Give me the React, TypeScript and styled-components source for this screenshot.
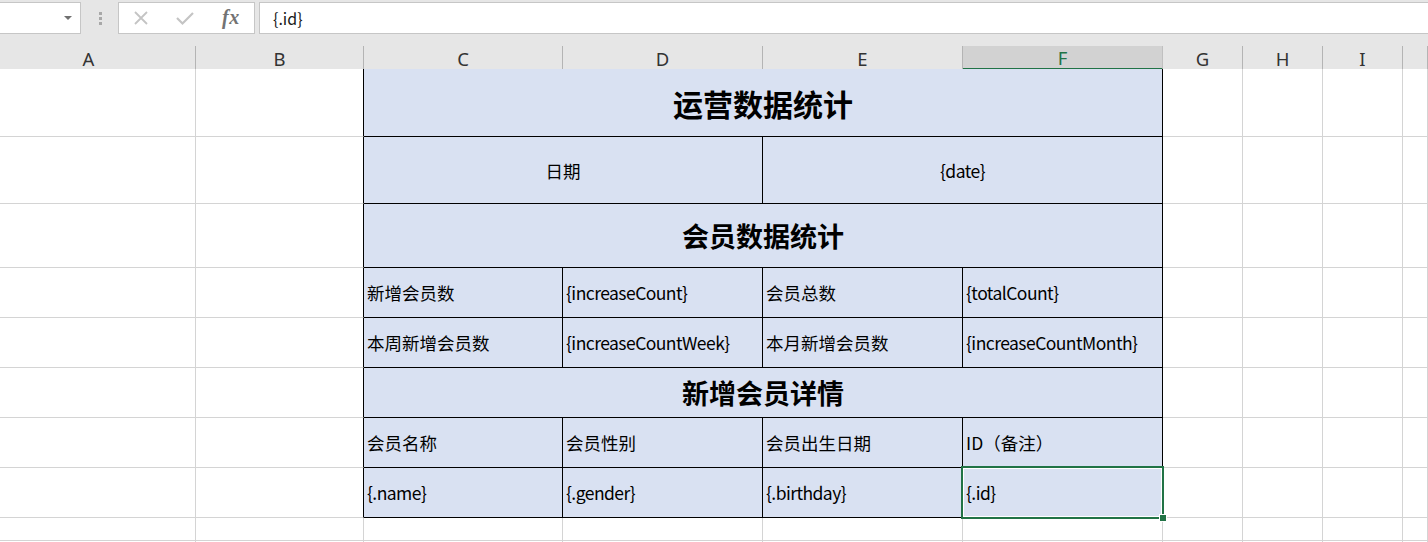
import { Fragment } from 'react';
import styled, { createGlobalStyle } from 'styled-components';

const GlobalStyle = createGlobalStyle`
  html, body {
    margin: 0;
    padding: 0;
    background: #fff;
    overflow: hidden;
  }
  body {
    font-family: "Noto Sans CJK SC", "Noto Sans", sans-serif;
  }
`;

const COLS = '196px 168px 199px 200px 200px 200px 80px 80px 80px 1fr';
const ROWS = '68px 67px 64px 50px 50px 50px 50px 50px 23px 50px';

const Page = styled.div`
  width: 1428px;
  height: 542px;
  display: flex;
  flex-direction: column;
  overflow: hidden;
`;

const FormulaBar = styled.div`
  flex-shrink: 0;
  height: 46px;
  box-sizing: border-box;
  background: #e6e6e6;
  display: flex;
  align-items: flex-start;
  padding-top: 2px;
`;

const NameBox = styled.div`
  width: 82px;
  height: 32px;
  margin-left: -1px;
  box-sizing: border-box;
  background: #fff;
  border: 1px solid #c6c6c6;
  display: flex;
  align-items: center;
  justify-content: flex-end;
  padding-right: 8px;
`;

const Caret = styled.span`
  width: 0;
  height: 0;
  border-left: 4px solid transparent;
  border-right: 4px solid transparent;
  border-top: 4px solid #707070;
`;

const Grip = styled.div`
  width: 37px;
  height: 32px;
  display: flex;
  flex-direction: column;
  align-items: center;
  justify-content: center;
  gap: 2px;
  padding-left: 1px;
  box-sizing: border-box;

  span {
    width: 3px;
    height: 3px;
    background: #a8a8a8;
  }
`;

const EditBox = styled.div`
  width: 137px;
  height: 32px;
  box-sizing: border-box;
  background: #fff;
  border: 1px solid #c6c6c6;
  display: flex;
  align-items: center;
  padding-left: 14px;
  gap: 26px;
`;

const Fx = styled.span`
  font-family: "Liberation Serif", "DejaVu Serif", serif;
  font-style: italic;
  font-size: 20px;
  font-weight: bold;
  color: #737373;
  letter-spacing: 0.5px;
  margin-left: 1px;
  margin-top: -2px;
`;

const FormulaInput = styled.div`
  flex: 1;
  height: 32px;
  margin-left: 4px;
  margin-right: -1px;
  box-sizing: border-box;
  background: #fff;
  border: 1px solid #c6c6c6;
  display: flex;
  align-items: center;
  padding-left: 13px;
  font-size: 16px;
  color: #1a1a1a;
`;

const HeaderRow = styled.div`
  flex-shrink: 0;
  display: grid;
  grid-template-columns: ${COLS};
  height: 23px;
  background: #e6e6e6;
`;

const ColHead = styled.div<{ $active?: boolean; $shift?: number }>`
  box-sizing: border-box;
  border-right: 1px solid ${(p) => (p.$active ? '#c0c0c0' : '#b4b4b4')};
  border-bottom: ${(p) => (p.$active ? '2px solid #217346' : '1px solid #ababab')};
  background: ${(p) => (p.$active ? '#d2d2d2' : 'transparent')};
  color: ${(p) => (p.$active ? '#217346' : '#333')};
  font-family: "Noto Sans", "Open Sans", sans-serif;
  font-size: 18.5px;
  line-height: 1;
  display: flex;
  align-items: center;
  justify-content: center;
  padding-right: ${(p) => p.$shift ?? 0}px;
  padding-top: 3px;
`;

const Sheet = styled.div`
  display: grid;
  grid-template-columns: ${COLS};
  grid-template-rows: ${ROWS};
  flex: 1;
  min-height: 0;
  overflow: hidden;
`;

const Cell = styled.div<{
  $span?: number;
  $table?: boolean;
  $edge?: boolean;
  $align?: 'left' | 'center';
  $size?: number;
  $bold?: boolean;
  $latin?: boolean;
}>`
  position: relative;
  box-sizing: border-box;
  grid-column: span ${(p) => p.$span ?? 1};
  border-right: 1px solid ${(p) => (p.$table || p.$edge ? '#000' : '#d4d4d4')};
  border-bottom: 1px solid ${(p) => (p.$table ? '#000' : '#d4d4d4')};
  background: ${(p) => (p.$table ? '#d9e1f2' : '#fff')};
  display: flex;
  align-items: center;
  justify-content: ${(p) => (p.$align === 'center' ? 'center' : 'flex-start')};
  padding-left: ${(p) => (p.$align === 'center' ? 0 : 3)}px;
  font-size: ${(p) => p.$size ?? 17.5}px;
  font-weight: ${(p) => (p.$bold ? 700 : 400)};
  letter-spacing: ${(p) => (p.$latin ? '-0.55px' : '0')};
  color: #000;
  white-space: nowrap;
`;

const Selection = styled.div`
  position: absolute;
  top: -2px;
  left: -2px;
  right: -2px;
  bottom: -2px;
  border: 2px solid #217346;
  box-shadow: inset 0 0 0 1px #fff;
  z-index: 2;

  &::after {
    content: '';
    position: absolute;
    right: -5px;
    bottom: -5px;
    width: 6px;
    height: 6px;
    background: #217346;
    border: 1px solid #fff;
  }
`;

type TCell = { text: string; span?: number; title?: number; center?: boolean; selected?: boolean };

const tableRows: TCell[][] = [
  [{ text: '运营数据统计', span: 4, title: 30 }],
  [
    { text: '日期', span: 2, center: true },
    { text: '{date}', span: 2, center: true },
  ],
  [{ text: '会员数据统计', span: 4, title: 27 }],
  [
    { text: '新增会员数' },
    { text: '{increaseCount}' },
    { text: '会员总数' },
    { text: '{totalCount}' },
  ],
  [
    { text: '本周新增会员数' },
    { text: '{increaseCountWeek}' },
    { text: '本月新增会员数' },
    { text: '{increaseCountMonth}' },
  ],
  [{ text: '新增会员详情', span: 4, title: 27 }],
  [
    { text: '会员名称' },
    { text: '会员性别' },
    { text: '会员出生日期' },
    { text: 'ID（备注）' },
  ],
  [
    { text: '{.name}' },
    { text: '{.gender}' },
    { text: '{.birthday}' },
    { text: '{.id}', selected: true },
  ],
];

const letters = ['A', 'B', 'C', 'D', 'E', 'F', 'G', 'H', 'I', ''];

const isLatin = (s: string) => /^[\x20-\x7e]+$/.test(s);

function CrossIcon() {
  return (
    <svg width="16" height="16" viewBox="0 0 16 16">
      <path d="M2 2 L14 14 M14 2 L2 14" stroke="#c4c4c4" strokeWidth="1.8" fill="none" />
    </svg>
  );
}

function CheckIcon() {
  return (
    <svg width="20" height="16" viewBox="0 0 20 16">
      <path d="M2 8 L7.5 13.5 L18 3" stroke="#c4c4c4" strokeWidth="2.2" fill="none" />
    </svg>
  );
}

export default function App() {
  const extraRows = 2;
  return (
    <Page>
      <GlobalStyle />
      <FormulaBar>
        <NameBox>
          <Caret />
        </NameBox>
        <Grip>
          <span />
          <span />
          <span />
        </Grip>
        <EditBox>
          <CrossIcon />
          <CheckIcon />
          <Fx>fx</Fx>
        </EditBox>
        <FormulaInput>{'{.id}'}</FormulaInput>
      </FormulaBar>

      <HeaderRow>
        {letters.map((l, i) => (
          <ColHead key={i} $active={l === 'F'} $shift={l === 'A' ? 18 : 0}>
            {l}
          </ColHead>
        ))}
      </HeaderRow>

      <Sheet>
        {tableRows.map((row, r) => (
          <Fragment key={r}>
            <Cell />
            <Cell $edge />
            {row.map((c, k) => (
              <Cell
                key={k}
                $table
                $span={c.span}
                $align={c.title || c.center ? 'center' : 'left'}
                $size={c.title}
                $bold={!!c.title}
                $latin={isLatin(c.text)}
              >
                {c.text}
                {c.selected && <Selection />}
              </Cell>
            ))}
            <Cell />
            <Cell />
            <Cell />
            <Cell />
          </Fragment>
        ))}
        {Array.from({ length: extraRows * 10 }).map((_, i) => (
          <Cell key={`e${i}`} />
        ))}
      </Sheet>
    </Page>
  );
}
